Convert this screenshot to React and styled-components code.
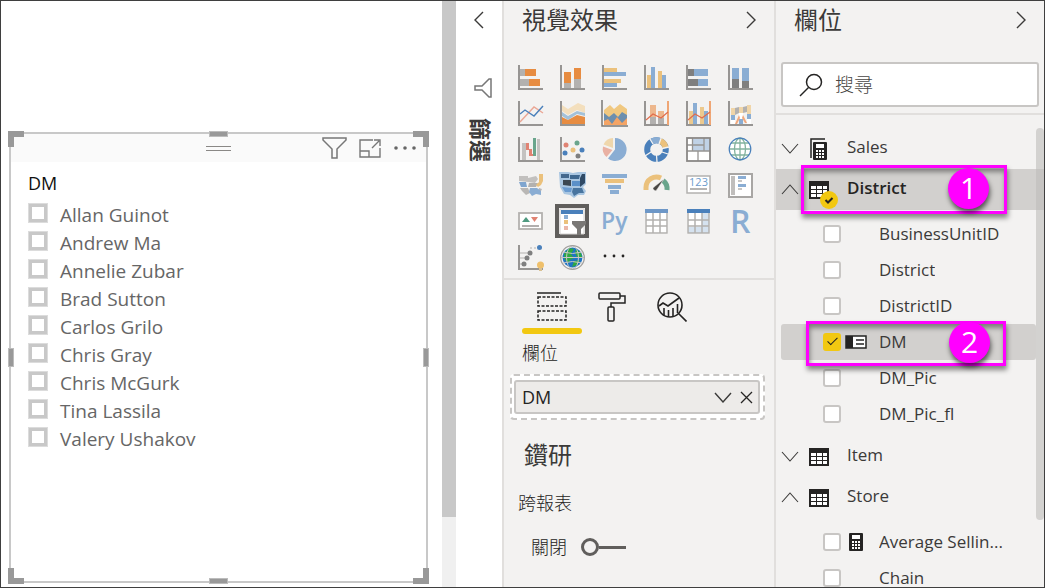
import React, { useState } from "react";
import styled, { createGlobalStyle, css } from "styled-components";

const GlobalStyle = createGlobalStyle`
  *, *::before, *::after { box-sizing: border-box; }
  body {
    margin: 0;
    background: #fff;
    color: #252423;
    font-family: "Open Sans", "Noto Sans CJK TC", sans-serif;
    font-size: 17px;
  }
  button, input { font: inherit; color: inherit; }
  ul { list-style: none; margin: 0; padding: 0; }
  h2, h3, p { margin: 0; }
  svg { display: block; flex: none; }
`;

const Window = styled.div`
  display: flex;
  height: 100vh;
  overflow: hidden;
  border: 1px solid #3f3f3f;
`;

const IconButton = styled.button`
  display: flex;
  align-items: center;
  justify-content: center;
  padding: 0;
  border: 0;
  background: none;
  cursor: pointer;
`;

/* ---------- report canvas ---------- */

const Canvas = styled.main`
  flex: 1;
  min-width: 0;
  display: flex;
  padding: 131px 14px 4px 8px;
`;

const Visual = styled.section`
  position: relative;
  flex: 1;
  min-width: 0;
  border: 2px solid #c8c8c8;
`;

const VisualHeader = styled.header`
  display: grid;
  grid-template-columns: 1fr auto 1fr;
  align-items: center;
  height: 28px;
  background: #fafafa;
`;

const Grip = styled.div`
  grid-column: 2;
  width: 25px;
  height: 5px;
  border: solid #8a8886;
  border-width: 1px 0;
`;

const VisualTools = styled.div`
  display: flex;
  justify-content: flex-end;
  gap: 12px;
  padding-right: 9px;
`;

const handleEdge = {
  top: css`top: -3px; left: calc(50% - 10px); width: 19px; height: 6px;`,
  bottom: css`bottom: -3px; left: calc(50% - 10px); width: 19px; height: 6px;`,
  left: css`left: -3px; top: calc(50% - 10px); width: 6px; height: 19px;`,
  right: css`right: -3px; top: calc(50% - 10px); width: 6px; height: 19px;`,
};

const Handle = styled.span`
  position: absolute;
  background: #999;
  outline: 1px solid #bcbcbc;
  outline-offset: -1px;
  ${(p) => handleEdge[p.$edge]}
`;

const Corner = styled.span`
  position: absolute;
  width: 16px;
  height: 16px;
  border: 0 solid #999;
  ${(p) => p.$v}: -3px;
  ${(p) => p.$h}: -3px;
  border-${(p) => p.$v}-width: 6px;
  border-${(p) => p.$h}-width: 6px;
`;

const SlicerBody = styled.div`
  padding: 9px 17px;
`;

const SlicerTitle = styled.h3`
  font-size: 18px;
  line-height: 24px;
  font-weight: 400;
  color: #111;
`;

const SlicerItem = styled.label`
  display: flex;
  align-items: center;
  gap: 12px;
  height: 28px;
  font-size: 19px;
  line-height: 28px;
  color: #666;
`;

const SlicerList = styled.ul`
  padding-top: 6px;
`;

const SlicerBox = styled.input.attrs({ type: "checkbox" })`
  appearance: none;
  width: 20px;
  height: 20px;
  margin: 0 0 4px;
  border: 4px solid #c8c8c8;
  outline: 1px solid #dcdcdc;
  outline-offset: -1px;
  background: #fff;
  &:checked { background: #666; }
`;

const CanvasScroll = styled.div`
  flex: none;
  width: 14px;
  background: linear-gradient(#c8c8c8 516px, #f0f0f0 516px);
`;

/* ---------- collapsed filter pane ---------- */

const FilterPane = styled.aside`
  flex: none;
  display: flex;
  flex-direction: column;
  align-items: center;
  width: 46px;
  padding-top: 10px;
  background: #fff;
`;

const FilterIconWrap = styled.div`
  padding: 49px 0 20px 8px;
`;

const FilterLabel = styled.h2`
  writing-mode: vertical-rl;
  text-orientation: sideways;
  padding-right: 0;
  margin-left: 4px;
  font-size: 22px;
  line-height: 24px;
  font-weight: 700;
  color: #3b3a39;
`;

/* ---------- side panes ---------- */

const Pane = styled.aside`
  flex: none;
  display: flex;
  flex-direction: column;
  width: ${(p) => p.$width};
  border-left: 2px solid #e1dfdd;
  background: #f3f2f1;
`;

const PaneHeader = styled.header`
  display: flex;
  align-items: center;
  justify-content: space-between;
  height: 38px;
  padding: 0 18px;
`;

const PaneTitle = styled.h2`
  font-size: 24px;
  line-height: 32px;
  font-weight: 400;
  color: #3b3a39;
`;

const Gallery = styled.div`
  display: grid;
  grid-template-columns: repeat(6, 42px);
  grid-auto-rows: 36px;
  place-items: center;
  padding: 20px 8px 3px 5px;
  border-bottom: 2px solid #e1dfdd;
`;

const GalleryButton = styled(IconButton)`
  width: 34px;
  height: 34px;
  border: 4px solid ${(p) => (p.$selected ? "#605e5c" : "transparent")};
`;

const Tabs = styled.div`
  display: flex;
  padding: 8px 18px 0;
`;

const Tab = styled(IconButton)`
  width: 60px;
  height: 46px;
  padding-bottom: 8px;
  position: relative;
  &::after {
    content: "";
    position: absolute;
    inset: auto 0 0;
    height: 6px;
    border-radius: 3px;
    background: ${(p) => (p.$active ? "#f2c811" : "transparent")};
  }
`;

const WellLabel = styled.h3`
  padding: 7px 18px;
  font-size: 18px;
  line-height: 24px;
  font-weight: 300;
`;

const Well = styled.div`
  margin: 2px 9px 0 6px;
  padding: 4px 3px 4px 2px;
  border: 2px dashed #c8c6c4;
  border-radius: 4px;
  background: #fff;
`;

const Chip = styled.div`
  display: flex;
  align-items: center;
  gap: 8px;
  height: 34px;
  padding: 0 5px 0 6px;
  border: 2px solid #c8c6c4;
  border-radius: 3px;
  background: #edebe9;
  font-size: 18px;
`;

const ChipName = styled.span`
  flex: 1;
`;

const Drill = styled.section`
  padding: 19px 20px 0;
`;

const DrillLabel = styled.h3`
  margin: 20px -6px 0;
  font-size: 18px;
  line-height: 24px;
  font-weight: 300;
`;

const SwitchRow = styled.label`
  display: flex;
  align-items: center;
  gap: 14px;
  margin-top: 20px;
  padding-left: 7px;
  font-size: 18px;
  line-height: 24px;
  font-weight: 300;
`;

const Switch = styled.input.attrs({ type: "checkbox", role: "switch" })`
  appearance: none;
  display: flex;
  align-items: center;
  flex-direction: ${(p) => (p.checked ? "row-reverse" : "row")};
  width: 45px;
  height: 18px;
  margin: 0;
  &::before {
    content: "";
    width: 18px;
    height: 18px;
    border: 3px solid #605e5c;
    border-radius: 50%;
  }
  &::after {
    content: "";
    flex: 1;
    height: 3px;
    background: #605e5c;
  }
`;

/* ---------- fields pane ---------- */

const SearchBox = styled.label`
  display: flex;
  align-items: center;
  gap: 12px;
  height: 45px;
  margin: 23px 5px 6px;
  padding: 0 16px;
  border: 2px solid #c8c6c4;
  border-radius: 3px;
  background: #fff;
`;

const SearchInput = styled.input`
  flex: 1;
  min-width: 0;
  padding: 0;
  border: 0;
  outline: 0;
  background: none;
  font-size: 19px;
  font-weight: 300;
  &::placeholder { color: #484644; opacity: 1; }
`;

const TreeArea = styled.div`
  position: relative;
  flex: 1;
  min-height: 0;
  overflow: hidden;
  border-top: 2px solid #e1dfdd;
  padding-top: 13px;
`;

const TreeThumb = styled.span`
  position: absolute;
  top: 13px;
  right: 0;
  width: 8px;
  height: 392px;
  border-radius: 4px;
  background: rgba(190, 188, 186, 0.6);
`;

const TableRow = styled.div`
  position: relative;
  display: flex;
  align-items: center;
  height: 41px;
  padding-left: 5px;
  background: ${(p) => (p.$selected ? "#d2d0ce" : "transparent")};
`;

const Twisty = styled(IconButton)`
  width: 18px;
  height: 24px;
  margin-right: 10px;
`;

const TableIcon = styled.span`
  position: relative;
  margin-right: 18px;
`;

const Badge = styled.span`
  position: absolute;
  left: 11px;
  top: 10px;
`;

const TableName = styled.span`
  padding-bottom: 3px;
  font-size: 17px;
  line-height: 24px;
  font-weight: ${(p) => (p.$strong ? 600 : 400)};
  color: ${(p) => (p.$strong ? "#252423" : "#3b3a39")};
`;

const FieldList = styled.ul`
  padding: 6px 8px 4px 5px;
`;

const FieldRow = styled.label`
  position: relative;
  display: flex;
  align-items: center;
  height: 36px;
  padding-left: 42px;
  border-radius: 3px;
  background: ${(p) => (p.$selected ? "#d2d0ce" : "transparent")};
`;

const FieldBox = styled.input.attrs({ type: "checkbox" })`
  appearance: none;
  display: flex;
  justify-content: center;
  flex: none;
  width: 18px;
  height: 18px;
  margin: 0 4px 0 0;
  border: 2px solid #c8c6c4;
  border-radius: 3px;
  background: #fff;
  &:checked {
    border-color: #f2c811;
    background: #f2c811;
  }
  &:checked::after {
    content: "";
    width: 5px;
    height: 10px;
    border: solid #252423;
    border-width: 0 1px 1px 0;
    transform: rotate(45deg);
  }
`;

const FieldIcon = styled.span`
  display: flex;
  justify-content: center;
  width: 22px;
  margin-right: 12px;
`;

const FieldName = styled.span`
  font-size: 17px;
  line-height: 24px;
  color: #3b3a39;
  overflow: hidden;
  white-space: nowrap;
`;

const Callout = styled.span`
  position: absolute;
  z-index: 1;
  left: 25px;
  top: ${(p) => (p.$tall ? "-4px" : "-3px")};
  width: ${(p) => (p.$tall ? "206px" : "200px")};
  height: ${(p) => (p.$tall ? "49px" : "45px")};
  display: flex;
  align-items: ${(p) => (p.$tall ? "flex-start" : "flex-end")};
  justify-content: flex-end;
  padding-right: ${(p) => (p.$tall ? "15px" : "13px")};
  border: 3px solid #f0f;
  box-shadow: 1px 4px 5px rgba(0, 0, 0, 0.45), inset 1px 4px 5px rgba(0, 0, 0, 0.4);
  pointer-events: none;
`;

const CalloutNumber = styled.span`
  flex: none;
  width: 41px;
  height: 41px;
  border-radius: 50%;
  background: #f0f;
  box-shadow: 1px 4px 5px rgba(0, 0, 0, 0.6);
  color: #fff;
  font-size: 30px;
  line-height: 40px;
  text-align: center;
`;

/* ---------- drawings ---------- */

const G = "#979593", LG = "#b3b1af", DG = "#7f7f7f";
const OR = "#e78c41", BL = "#8aadd3", YE = "#ebc17c", DB = "#4a80bb", RD = "#e08373", GN = "#6aa58c";

const R = (x, y, w, h, f) => <rect key={`${x},${y},${w},${h}`} x={x} y={y} width={w} height={h} fill={f} />;
const axes = <path d="M1 0V24H25" fill="none" stroke={G} strokeWidth="2" />;

const galleryIcons = [
  ["Stacked bar chart", <>{R(2, 4, 5, 7, LG)}{R(7, 4, 11, 7, OR)}{R(2, 14, 9, 7, LG)}{R(11, 14, 11, 7, OR)}{axes}</>],
  ["Stacked column chart", <>{R(4, 7, 7, 11, OR)}{R(4, 18, 7, 5, LG)}{R(14, 3, 7, 11, OR)}{R(14, 14, 7, 9, LG)}{axes}</>],
  ["Clustered bar chart", <>{R(2, 3, 13, 4, YE)}{R(2, 7, 22, 4, BL)}{R(2, 14, 17, 4, YE)}{R(2, 18, 13, 4, BL)}{axes}</>],
  ["Clustered column chart", <>{R(3, 10, 4, 13, YE)}{R(7, 2, 4, 21, BL)}{R(14, 6, 4, 17, YE)}{R(18, 10, 4, 13, BL)}{axes}</>],
  ["100% stacked bar chart", <>{R(2, 4, 6, 7, DG)}{R(8, 4, 14, 7, BL)}{R(2, 14, 10, 7, DG)}{R(12, 14, 10, 7, BL)}{axes}</>],
  ["100% stacked column chart", <>{R(4, 3, 7, 11, BL)}{R(4, 14, 7, 9, DG)}{R(14, 3, 7, 13, BL)}{R(14, 16, 7, 7, DG)}{axes}</>],
  ["Line chart", <>{axes}<path d="M2 21 16 6 25 12" fill="none" stroke="#eba795" strokeWidth="1.4" /><path d="M2 13 7 9 16 15 25 5" fill="none" stroke={DB} strokeWidth="1.4" /></>],
  ["Area chart", <><path d="M2 4 8 8 18 2 25 5V12L17 9 8 14 2 10Z" fill="#f3dfbd" /><path d="M2 11 8 15 17 10 25 12V15L17 13 8 19 2 15Z" fill="#a3c1d8" /><path d="M2 16 8 19 17 14 25 16V23H2Z" fill={OR} />{axes}</>],
  ["Stacked area chart", <><path d="M2 9 8 4 12 8 18 3 25 8V24H2Z" fill="#f0c880" /><path d="M2 12 7 16 12 12 16 16 20 11 25 14V24H2Z" fill="#6c8fae" /><path d="M2 20 6 18 10 23 15 16 20 22 25 17V24H2Z" fill="#f4a465" /><path d="M0-1V25H26" fill="none" stroke="#7a7876" strokeWidth="1.5" /></>],
  ["Line and stacked column chart", <>{R(6, 4, 6, 12, "#edb78d")}{R(6, 16, 6, 7, LG)}{R(14, 10, 6, 7, "#edb78d")}{R(14, 17, 6, 6, LG)}{axes}{R(23, 0, 2, 24, "#efa675")}<path d="M2 19 9 13 17 17 24 11" fill="none" stroke="#e06c4c" strokeWidth="1.2" /></>],
  ["Line and clustered column chart", <>{R(3, 10, 4, 13, "#ecc98e")}{R(7, 2, 4, 21, BL)}{R(14, 6, 4, 17, "#ecc98e")}{R(18, 10, 4, 13, BL)}{axes}{R(23, 0, 2, 24, "#efa675")}<path d="M2 19 9 13 16 17 24 11" fill="none" stroke="#e06c4c" strokeWidth="1.2" /></>],
  ["Ribbon chart", <>{R(3, 19, 4, 4, "#fff")}{R(19, 18, 4, 5, "#fff")}{R(3, 7, 4, 7, "#f0d5a8")}{R(3, 14, 4, 5, BL)}<path d="M7 7 11 6V12L7 14Z" fill={LG} />{R(11, 6, 4, 6, "#f0d5a8")}{R(11, 12, 4, 6, "#fff")}{R(11, 18, 4, 5, BL)}<path d="M15 6 19 5V11L15 12Z" fill={LG} />{R(19, 4, 4, 9, "#f0d5a8")}{R(19, 13, 4, 5, BL)}<path d="M11 14 7 23H9L12 17ZM15 14 19 22H17L14 17Z" fill="#f1a77b" />{axes}</>],
  ["Waterfall chart", <>{R(4, 6, 4, 17, "#c4c2c0")}{R(8, 6, 3, 7, RD)}{R(11, 12, 3, 7, RD)}{R(14, 17, 3, 2, RD)}{R(15, 1, 3, 18, GN)}{R(19, 2, 3, 21, "#c4c2c0")}{axes}</>],
  ["Scatter chart", <>{axes}{[[6, 8, RD], [17, 6, GN], [5, 16, DB], [13, 13, YE], [22, 13, DB], [18, 19, DG]].map(([x, y, c]) => <circle key={x} cx={x} cy={y} r="2.5" fill={c} />)}</>],
  ["Pie chart", <><path d="M13 12.500V1A11.500 11.500 0 1 1 6 21.500Z" fill={BL} /><path d="M11 11V1A11 11 0 0 0 1.500 7.500Z" fill="#efd7ac" /><path d="M10.500 13 1 9.500A11 11 0 0 0 4.500 20Z" fill="#e9b1a3" /></>],
  ["Donut chart", <g fill="none" strokeWidth="6" stroke={DB}><circle cx="12.500" cy="12.500" r="9.300" /><path d="M7.500 4.700A9.300 9.300 0 0 1 15.800 3.800" stroke={BL} /><path d="M15.800 3.800A9.300 9.300 0 0 1 21.600 11" stroke={YE} /><path d="M5 .5 9 7M17.500 0 15 7M25 10 18 11.500M1 19 7 15M24 17 18 15M13 25 12.500 18" stroke="#f3f2f1" strokeWidth="1.300" /></g>],
  ["Treemap", <>{R(1, 1, 23, 23, "#fff")}{R(7, 2, 17, 12, "#c0d2e6")}<path d="M6.500 1V14M1 14H24M12 14V24M7 8H18M18 1V14M1 8H6" stroke={G} fill="none" strokeWidth="1.300" /><rect x="1" y="1" width="23" height="23" fill="none" stroke="#8a8886" strokeWidth="1.800" /></>],
  ["Map", <><circle cx="12" cy="12" r="11" fill="#fff" /><g fill="none" stroke="#83b39f" strokeWidth="1.300"><ellipse cx="12" cy="12" rx="5.500" ry="11" /><path d="M12 1V23M1 12H23M3 6H21M3 18H21" /></g><circle cx="12" cy="12" r="10.800" fill="none" stroke={DB} strokeWidth="1.200" /></>],
  ["Filled map", <g transform="translate(0 1)"><path d="M1 2H10V4L18 2 20 5 17 9 10 8 1 7Z" fill="#c2c0be" /><path d="M1 8H8L9 13H3Z" fill="#7fa5cf" /><path d="M11 9H20L18 13H10Z" fill={LG} /><path d="M21 0H25V7L23 11 20 13 18 11 21 8Z" fill={YE} /><path d="M2 14 10 14 12 19 8 21 4 17ZM21 14 24 15 22 19 20 18Z" fill="#b9b7b5" /><path d="M12 14H19L23 17V21L18 20 14 22 11 18Z" fill={BL} /></g>],
  ["Shape map", <g transform="translate(0 -1)"><path d="M-1 0H8L13 1 18 0H26V12L23 15 26 19 24 23 18 23 14 26 10 23 4 22 0 15Z" fill="#a9c6e1" /><path d="M1 2H9V6H1Z" fill="#44688d" /><path d="M10 3H20L19 7H10Z" fill="#3f6890" /><path d="M22 2H25V11L20 15V6Z" fill="#2f4a66" /><path d="M3 8H11V14L3 13Z" fill="#3b4752" /><path d="M12 9H20V14H12Z" fill="#5b90c8" /><path d="M2 15 12 16 11 20H5Z" fill="#6a9bd0" /><path d="M13 16H22L24 21H19L14 24 12 20Z" fill="#49759f" /></g>],
  ["Funnel", <>{R(0, 1, 25, 4, BL)}{R(3, 6, 19, 4, YE)}{R(6, 12, 13, 4, BL)}{R(8, 17, 9, 4, BL)}</>],
  ["Gauge", <><path d="M2 17V14.500A10.500 10.500 0 0 1 17 5" fill="none" stroke={YE} strokeWidth="5" /><path d="M19 7.500A10.500 10.500 0 0 1 23 17" fill="none" stroke={GN} strokeWidth="5" /><path d="M20 6 13 16.500A2 2 0 1 1 10 14Z" fill="#484644" stroke="#f3f2f1" strokeWidth=".5" /></>],
  ["Card", <><rect x="1" y="3" width="23" height="17" fill="#fff" stroke={LG} strokeWidth="1.500" /><text x="12.500" y="13" fontSize="11" textAnchor="middle" fill="#6d9ccc">123</text><path d="M4 16H21" stroke={G} strokeWidth="1.400" /></>],
  ["Multi-row card", <><rect x="1" y="1" width="23" height="23" fill="#fff" stroke="#a8a6a4" strokeWidth="2" />{R(3, 3, 4, 19, "#c0bebc")}{R(10, 3, 8, 3, BL)}{R(10, 7, 4, 2, "#c8c6c4")}{R(10, 11, 8, 3, BL)}{R(10, 15, 4, 2, "#c8c6c4")}</>],
  ["KPI", <><rect x="1" y="4" width="23" height="16" fill="#fff" stroke={LG} strokeWidth="1.800" /><path d="M4 13 8 8 12 13Z" fill="#4f9a80" /><path d="M13 8H20L16.500 13Z" fill={RD} /><path d="M4 17H21" stroke={G} strokeWidth="1.500" /></>],
  ["Slicer", <>{R(0, 0, 24, 25, "#fff")}<path d="M0 0H24V25H0Z" fill="none" stroke="#d4d2d0" />{R(1, 1, 22, 4, DB)}{R(4, 6, 4, 4, BL)}{R(4, 11, 4, 4, YE)}{R(4, 17, 4, 4, "#ebb7a9")}<path d="M12 12H26V15L21 20V26H17V20L12 15Z" fill="#7a7876" /></>],
  ["Python visual", <text x="-1" y="20" fontSize="23" fontWeight="600" fill={BL} fontFamily="Open Sans">Py</text>],
  ["Table", <>{R(1, 0, 23, 25, "#fff")}<path d="M2 4V24H23V4M9 4V24M16 4V24M2 11H23M2 17H23" fill="none" stroke={LG} strokeWidth="1.500" />{R(1, 0, 23, 4, "#6d97c7")}</>],
  ["Matrix", <>{R(1, 0, 23, 25, "#fff")}{R(16, 4, 7, 20, "#d5e2ef")}{R(2, 18, 21, 6, "#d5e2ef")}<path d="M2 4V24H23V4M9 4V24M16 4V24M2 11H23M2 17H23" fill="none" stroke={LG} strokeWidth="1.500" />{R(1, 0, 23, 4, DB)}</>],
  ["R script visual", <text x="2" y="24" fontSize="32" fontWeight="600" fill={BL} fontFamily="Open Sans">R</text>],
  ["Key influencers", <>{axes}{[[6, 19], [9, 13], [12, 8]].map(([x, y]) => <g key={x}><path d={`M2 ${y}H${x}`} stroke={LG} /><circle cx={x} cy={y} r="2.500" fill={DG} /></g>)}<path d="M12 3H21" stroke={LG} strokeDasharray="2 2" /><circle cx="21.500" cy="2.500" r="2.500" fill={DB} /><circle cx="22.500" cy="20" r="3.500" fill="#efc06b" />{R(21, 23, 3, 3, "#d9c193")}</>],
  ["ArcGIS map", <><circle cx="12.500" cy="12.500" r="10" fill="#1f74c4" /><path d="M4 9 9 3 14 4 11 9 14 13 10 15 9 18 5 15ZM16 4 21 8 22 12 17 12 15 8ZM14 16 20 15 17 20 12 22Z" fill="#2fa842" /><g fill="none" stroke="#c8c6c4" strokeWidth="1"><ellipse cx="12.500" cy="12.500" rx="6" ry="11.500" /><path d="M1 12.500H24M3 7Q12.500 10 22 7M3 18Q12.500 15 22 18" /></g><circle cx="12.500" cy="12.500" r="11.800" fill="none" stroke="#a19f9d" strokeWidth="1.300" /></>],
  ["More visuals", <>{[4, 13, 22].map((x) => <circle key={x} cx={x - 1} cy="11" r="1.400" fill="#252423" />)}</>],
];

const Chevron = ({ dir, size = "tall" }) => {
  const d = { left: "M9 1 1 9 9 17", right: "M1 1 9 9 1 17", down: "M1 1 9 10 17 1", up: "M1 10 9 1 17 10" }[dir];
  const flat = dir === "down" || dir === "up";
  return (
    <svg width={flat ? 18 : 10} height={flat ? 11 : 18} viewBox={flat ? "0 0 18 11" : "0 0 10 18"} fill="none" stroke="#3b3a39" strokeWidth={size === "tall" ? 1.4 : 1.1}>
      <path d={d} />
    </svg>
  );
};

const GridIcon = () => (
  <svg width="20" height="18" viewBox="0 0 20 18">
    <rect width="20" height="18" fill="#252423" />
    {[5, 9, 13].map((y) => [2, 8, 14].map((x) => R(x, y, x === 14 ? 4 : 5, 3, "#fff")))}
  </svg>
);

const CalcShape = ({ x = 0, y = 0 }) => (
  <g transform={`translate(${x} ${y})`}>
    <rect width="14" height="18" rx="1" fill="#252423" />
    {R(3, 2, 8, 4, "#fff")}
    {[8, 11, 14].map((r) => [3, 6, 9].map((c) => R(c, r, 2, 2, "#fff")))}
  </g>
);

const MeasureTableIcon = () => (
  <svg width="20" height="22" viewBox="0 0 20 22">
    <path d="M2 20V1H16" fill="none" stroke="#252423" strokeWidth="1.5" />
    <CalcShape x={4} y={4} />
  </svg>
);

const CheckBadge = () => (
  <svg width="18" height="18" viewBox="0 0 18 18">
    <circle cx="9" cy="9" r="9" fill="#f2c811" />
    <path d="M5.500 9 8 11.500 12.500 7" fill="none" stroke="#252423" strokeWidth="2" />
  </svg>
);

const fieldIcons = {
  card: (
    <svg width="22" height="14" viewBox="0 0 22 14">
      <rect x="1" y="1" width="20" height="12" fill="#fff" stroke="#252423" strokeWidth="1.500" />
      {R(1, 1, 7, 12, "#252423")}
      <path d="M11 5H19M11 9H19" stroke="#252423" strokeWidth="1.500" />
    </svg>
  ),
  calc: <svg width="14" height="18" viewBox="0 0 14 18"><CalcShape /></svg>,
};

/* ---------- data ---------- */

const managers = ["Allan Guinot", "Andrew Ma", "Annelie Zubar", "Brad Sutton", "Carlos Grilo", "Chris Gray", "Chris McGurk", "Tina Lassila", "Valery Ushakov"];

const tables = [
  { name: "Sales", measure: true },
  {
    name: "District",
    selected: true,
    callout: 1,
    fields: [
      { name: "BusinessUnitID" },
      { name: "District" },
      { name: "DistrictID" },
      { name: "DM", selected: true, icon: "card", callout: 2 },
      { name: "DM_Pic" },
      { name: "DM_Pic_fl" },
    ],
  },
  { name: "Item" },
  { name: "Store", fields: [{ name: "Average Sellin...", icon: "calc" }, { name: "Chain" }] },
];

function SlicerVisual() {
  return (
    <Visual>
      <VisualHeader>
        <Grip />
        <VisualTools>
          <IconButton aria-label="Filters">
            <svg width="25" height="22" viewBox="0 0 25 22" fill="none" stroke="#777" strokeWidth="1.500">
              <path d="M1 1H24V3L15 12V21H10V12L1 3Z" />
            </svg>
          </IconButton>
          <IconButton aria-label="Focus mode">
            <svg width="22" height="19" viewBox="0 0 22 19" fill="none" stroke="#777" strokeWidth="1.400">
              <path d="M14 1H1V18H21V9M1 12H10V18M13 9 20 2M15 1H21V7" />
            </svg>
          </IconButton>
          <IconButton aria-label="More options">
            <svg width="24" height="6" viewBox="0 0 24 6" fill="#666">
              <circle cx="3" cy="3" r="1.800" /><circle cx="12" cy="3" r="1.800" /><circle cx="21" cy="3" r="1.800" />
            </svg>
          </IconButton>
        </VisualTools>
      </VisualHeader>
      <SlicerBody>
        <SlicerTitle>DM</SlicerTitle>
        <SlicerList>
          {managers.map((name) => (
            <li key={name}>
              <SlicerItem><SlicerBox />{name}</SlicerItem>
            </li>
          ))}
        </SlicerList>
      </SlicerBody>
      {["top", "bottom", "left", "right"].map((e) => <Handle key={e} $edge={e} />)}
      {["top", "bottom"].map((v) => ["left", "right"].map((h) => <Corner key={v + h} $v={v} $h={h} />))}
    </Visual>
  );
}

function VisualizationsPane() {
  const [drill, setDrill] = useState(false);
  return (
    <Pane $width="272px">
      <PaneHeader>
        <PaneTitle>視覺效果</PaneTitle>
        <IconButton aria-label="Collapse"><Chevron dir="right" /></IconButton>
      </PaneHeader>
      <Gallery>
        {galleryIcons.map(([label, art]) => (
          <GalleryButton key={label} aria-label={label} $selected={label === "Slicer"}>
            <svg width="25" height="25" viewBox="0 0 25 25" overflow="visible">{art}</svg>
          </GalleryButton>
        ))}
      </Gallery>
      <Tabs role="tablist">
        <Tab role="tab" aria-label="Fields" aria-selected="true" $active>
          <svg width="30" height="30" viewBox="0 0 30 30" fill="none" stroke="#252423" strokeWidth="1.500">
            <path d="M0 1H24" />
            <path d="M1 5H29V14H1ZM1 19H29V28H1Z" strokeDasharray="3 1.500" />
          </svg>
        </Tab>
        <Tab role="tab" aria-label="Format" aria-selected="false">
          <svg width="28" height="30" viewBox="0 0 28 30" fill="none" stroke="#252423" strokeWidth="1.500">
            <rect x="1" y="1" width="21" height="6" rx="1" />
            <path d="M22 4H27V11H13V15" />
            <rect x="10" y="15" width="6" height="14" rx="1" />
          </svg>
        </Tab>
        <Tab role="tab" aria-label="Analytics" aria-selected="false">
          <svg width="30" height="30" viewBox="0 0 30 30" fill="none" stroke="#252423" strokeWidth="1.600">
            <circle cx="13" cy="13" r="12" />
            <path d="M21.500 21.500 29.500 29.500M2 14 6 11 11 14 22 6M7 16V23M11.500 18V25M16 16V24M20.500 12V21" />
          </svg>
        </Tab>
      </Tabs>
      <WellLabel>欄位</WellLabel>
      <Well>
        <Chip>
          <ChipName>DM</ChipName>
          <IconButton aria-label="Field options"><Chevron dir="down" /></IconButton>
          <IconButton aria-label="Remove field">
            <svg width="13" height="13" viewBox="0 0 13 13" stroke="#252423" strokeWidth="1.300"><path d="M1 1 12 12M12 1 1 12" /></svg>
          </IconButton>
        </Chip>
      </Well>
      <Drill>
        <PaneTitle as="h3">鑽研</PaneTitle>
        <DrillLabel>跨報表</DrillLabel>
        <SwitchRow>
          關閉
          <Switch checked={drill} onChange={(e) => setDrill(e.target.checked)} />
        </SwitchRow>
      </Drill>
    </Pane>
  );
}

function FieldsPane() {
  return (
    <Pane $width="270px">
      <PaneHeader>
        <PaneTitle>欄位</PaneTitle>
        <IconButton aria-label="Collapse"><Chevron dir="right" /></IconButton>
      </PaneHeader>
      <SearchBox>
        <svg width="24" height="24" viewBox="0 0 24 24" fill="none" stroke="#252423" strokeWidth="1.500">
          <circle cx="15" cy="9" r="7.500" /><path d="M9.500 14.500 1 23" />
        </svg>
        <SearchInput type="text" placeholder="搜尋" aria-label="搜尋" />
      </SearchBox>
      <TreeArea>
        <ul>
          {tables.map((t) => (
            <li key={t.name}>
              <TableRow $selected={t.selected}>
                <Twisty aria-label={t.name} aria-expanded={!!t.fields}><Chevron dir={t.fields ? "up" : "down"} size="thin" /></Twisty>
                <TableIcon>
                  {t.measure ? <MeasureTableIcon /> : <GridIcon />}
                  {t.selected && <Badge><CheckBadge /></Badge>}
                </TableIcon>
                <TableName $strong={t.selected}>{t.name}</TableName>
                {t.callout && <Callout $tall><CalloutNumber>{t.callout}</CalloutNumber></Callout>}
              </TableRow>
              {t.fields && (
                <FieldList>
                  {t.fields.map((f) => (
                    <li key={f.name}>
                      <FieldRow $selected={f.selected}>
                        <FieldBox defaultChecked={f.selected} />
                        <FieldIcon>{fieldIcons[f.icon]}</FieldIcon>
                        <FieldName>{f.name}</FieldName>
                        {f.callout && <Callout><CalloutNumber>{f.callout}</CalloutNumber></Callout>}
                      </FieldRow>
                    </li>
                  ))}
                </FieldList>
              )}
            </li>
          ))}
        </ul>
        <TreeThumb />
      </TreeArea>
    </Pane>
  );
}

export default function App() {
  return (
    <>
      <GlobalStyle />
      <Window>
        <Canvas><SlicerVisual /></Canvas>
        <CanvasScroll />
        <FilterPane>
          <IconButton aria-label="Expand"><Chevron dir="left" /></IconButton>
          <FilterIconWrap>
            <svg width="18" height="20" viewBox="0 0 18 20" fill="none" stroke="#777" strokeWidth="1.500">
              <path d="M17 1V19H15L8 12H1V8H8L15 1Z" />
            </svg>
          </FilterIconWrap>
          <FilterLabel>篩選</FilterLabel>
        </FilterPane>
        <VisualizationsPane />
        <FieldsPane />
      </Window>
    </>
  );
}
